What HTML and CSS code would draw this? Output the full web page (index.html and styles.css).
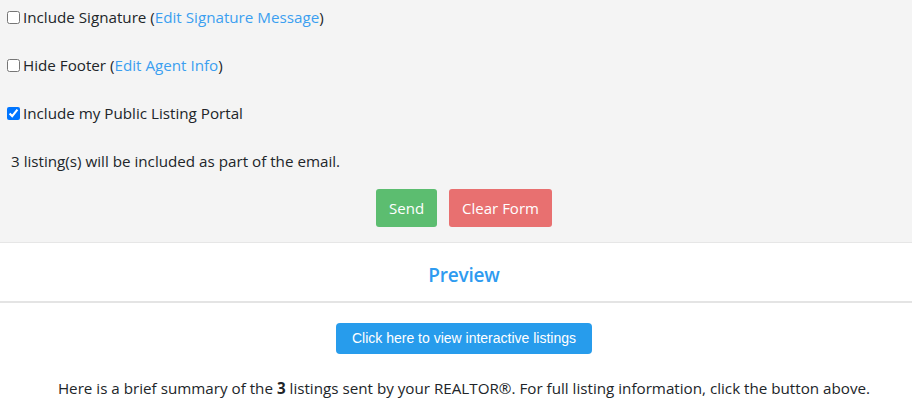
FILE: index.html
```html
<!DOCTYPE html>
<html lang="en">
<head>
  <meta charset="UTF-8" />
  <title>Send Listings</title>
  <link rel="stylesheet" href="styles.css">
</head>
<body>

<!-- Email options -->
<div id="send-form">
  <div class="form-row">
    <label><input type="checkbox" /> Include Signature (<a href="#">Edit Signature Message</a>)</label>
  </div>
  <div class="form-row">
    <label><input type="checkbox" /> Hide Footer (<a href="#">Edit Agent Info</a>)</label>
  </div>
  <div class="form-row">
    <label><input type="checkbox" checked /> Include my Public Listing Portal</label>
  </div>
  <div class="form-row count-text">
    3 listing(s) will be included as part of the email.
  </div>
  <div class="form-actions">
    <button class="btn btn-send">Send</button>
    <button class="btn btn-clear">Clear Form</button>
  </div>
</div>

<!-- Preview -->
<div id="preview-header">
  <h2>Preview</h2>
</div>

<div id="preview-body">
  <a href="#" class="view-btn">Click here to view interactive listings</a>
  <p class="summary">Here is a brief summary of the <b>3</b> listings sent by your REALTOR&reg;. For full listing information, click the button above.</p>
</div>

</body>
</html>
```

FILE: styles.css
```css
body {
  margin: 0;
  font-family: "Open Sans", "Noto Sans", sans-serif;
  font-size: 15.2px;
  color: #212529;
  background-color: #fff;
}

a {
  color: #3b9ff0;
  text-decoration: none;
}

#send-form {
  background-color: #f4f4f4;
  padding: 5px 7px 15px 7px;
  border-bottom: 1px solid #e6e6e6;
}

.form-row {
  line-height: 24px;
  margin-bottom: 24px;
}

.form-row label {
  display: flex;
  align-items: center;
}

.form-row input[type="checkbox"] {
  width: 13px;
  height: 13px;
  margin: 0 3px 0 0;
}

.count-text {
  padding-left: 4px;
  margin-bottom: 16px;
}

.form-actions {
  display: flex;
  justify-content: center;
  gap: 12px;
  padding-left: 16px;
}

.btn {
  height: 38px;
  padding: 0 13px;
  font-family: inherit;
  font-size: 15px;
  color: #fff;
  border: none;
  border-radius: 3px;
  cursor: pointer;
}

.btn-send {
  background-color: #5cbd70;
}

.btn-clear {
  background-color: #e87070;
}

#preview-header {
  box-sizing: border-box;
  height: 60px;
  padding: 5px 0 0 16px;
  display: flex;
  align-items: center;
  justify-content: center;
  border-bottom: 2px solid #e4e4e4;
}

#preview-header h2 {
  margin: 0;
  font-size: 19px;
  font-weight: 600;
  letter-spacing: -0.2px;
  color: #2e9bf0;
}

#preview-body {
  padding: 20px 0 0 16px;
  text-align: center;
}

.view-btn {
  display: inline-block;
  height: 31px;
  line-height: 31px;
  padding: 0 16px;
  font-family: "Liberation Sans", Arial, sans-serif;
  font-size: 14px;
  color: #fff;
  background-color: #279cec;
  border-radius: 4px;
}

.summary {
  margin: 22px 0 0 0;
  line-height: 24px;
}

.summary b {
  font-weight: 700;
}
```
